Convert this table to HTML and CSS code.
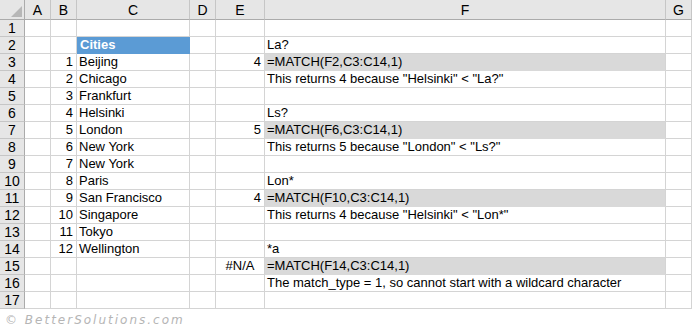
FILE: index.html
```html
<!DOCTYPE html>
<html>
<head lang="en">
    <meta charset="UTF-8">
    <title>MATCH wildcards</title>
    <link rel="stylesheet" href="styles.css">
</head>
<body>
<div class="sheet">
    <div class="corner"><span class="tri"></span></div>
    <div class="colhead">A</div>
    <div class="colhead">B</div>
    <div class="colhead">C</div>
    <div class="colhead">D</div>
    <div class="colhead">E</div>
    <div class="colhead">F</div>
    <div class="colhead">G</div>

    <div class="rowhead">1</div>
    <div class="cell"></div><div class="cell"></div><div class="cell"></div><div class="cell"></div><div class="cell"></div><div class="cell"></div><div class="cell"></div>

    <div class="rowhead">2</div>
    <div class="cell"></div><div class="cell"></div><div class="cell title">Cities</div><div class="cell"></div><div class="cell"></div><div class="cell">La?</div><div class="cell"></div>

    <div class="rowhead">3</div>
    <div class="cell"></div><div class="cell num">1</div><div class="cell">Beijing</div><div class="cell"></div><div class="cell num">4</div><div class="cell shade">=MATCH(F2,C3:C14,1)</div><div class="cell"></div>

    <div class="rowhead">4</div>
    <div class="cell"></div><div class="cell num">2</div><div class="cell">Chicago</div><div class="cell"></div><div class="cell"></div><div class="cell">This returns 4 because "Helsinki" &lt; "La?"</div><div class="cell"></div>

    <div class="rowhead">5</div>
    <div class="cell"></div><div class="cell num">3</div><div class="cell">Frankfurt</div><div class="cell"></div><div class="cell"></div><div class="cell"></div><div class="cell"></div>

    <div class="rowhead">6</div>
    <div class="cell"></div><div class="cell num">4</div><div class="cell">Helsinki</div><div class="cell"></div><div class="cell"></div><div class="cell">Ls?</div><div class="cell"></div>

    <div class="rowhead">7</div>
    <div class="cell"></div><div class="cell num">5</div><div class="cell">London</div><div class="cell"></div><div class="cell num">5</div><div class="cell shade">=MATCH(F6,C3:C14,1)</div><div class="cell"></div>

    <div class="rowhead">8</div>
    <div class="cell"></div><div class="cell num">6</div><div class="cell">New York</div><div class="cell"></div><div class="cell"></div><div class="cell">This returns 5 because "London" &lt; "Ls?"</div><div class="cell"></div>

    <div class="rowhead">9</div>
    <div class="cell"></div><div class="cell num">7</div><div class="cell">New York</div><div class="cell"></div><div class="cell"></div><div class="cell"></div><div class="cell"></div>

    <div class="rowhead">10</div>
    <div class="cell"></div><div class="cell num">8</div><div class="cell">Paris</div><div class="cell"></div><div class="cell"></div><div class="cell">Lon*</div><div class="cell"></div>

    <div class="rowhead">11</div>
    <div class="cell"></div><div class="cell num">9</div><div class="cell">San Francisco</div><div class="cell"></div><div class="cell num">4</div><div class="cell shade">=MATCH(F10,C3:C14,1)</div><div class="cell"></div>

    <div class="rowhead">12</div>
    <div class="cell"></div><div class="cell num">10</div><div class="cell">Singapore</div><div class="cell"></div><div class="cell"></div><div class="cell">This returns 4 because "Helsinki" &lt; "Lon*"</div><div class="cell"></div>

    <div class="rowhead">13</div>
    <div class="cell"></div><div class="cell num">11</div><div class="cell">Tokyo</div><div class="cell"></div><div class="cell"></div><div class="cell"></div><div class="cell"></div>

    <div class="rowhead">14</div>
    <div class="cell"></div><div class="cell num">12</div><div class="cell">Wellington</div><div class="cell"></div><div class="cell"></div><div class="cell">*a</div><div class="cell"></div>

    <div class="rowhead">15</div>
    <div class="cell"></div><div class="cell"></div><div class="cell"></div><div class="cell"></div><div class="cell err">#N/A</div><div class="cell shade">=MATCH(F14,C3:C14,1)</div><div class="cell"></div>

    <div class="rowhead">16</div>
    <div class="cell"></div><div class="cell"></div><div class="cell"></div><div class="cell"></div><div class="cell"></div><div class="cell">The match_type = 1, so cannot start with a wildcard character</div><div class="cell"></div>

    <div class="rowhead">17</div>
    <div class="cell"></div><div class="cell"></div><div class="cell"></div><div class="cell"></div><div class="cell"></div><div class="cell"></div><div class="cell"></div>
</div>
<div class="credit">&copy; BetterSolutions.com</div>
</body>
</html>
```

FILE: styles.css
```css
*{
    margin: 0;
    padding: 0;
    box-sizing: border-box;
}
body{
    background: #ffffff;
    font-family: "Liberation Sans", Arial, sans-serif;
    font-size: 13px;
    color: #000000;
}
.sheet{
    display: grid;
    grid-template-columns: 25px 26px 26px 113px 26px 49px 401px 26px;
    grid-template-rows: 20px repeat(17, 17px);
    width: 692px;
}
.corner,.colhead,.rowhead{
    background: #e6e6e6;
}
.corner{
    position: relative;
    border-right: 1px solid #ababab;
    border-bottom: 1px solid #ababab;
}
.corner .tri{
    position: absolute;
    right: 2px;
    bottom: 2px;
    width: 0;
    height: 0;
    border-left: 11px solid transparent;
    border-bottom: 11px solid #b7b7b7;
}
.colhead{
    border-right: 1px solid #c6c6c6;
    border-bottom: 1px solid #ababab;
    text-align: center;
    line-height: 19px;
    padding-top: 1px;
    font-size: 14px;
}
.rowhead{
    border-right: 1px solid #ababab;
    border-bottom: 1px solid #c6c6c6;
    text-align: center;
    line-height: 16px;
    font-size: 14px;
}
.cell{
    border-right: 1px solid #d4d4d4;
    border-bottom: 1px solid #d4d4d4;
    line-height: 16px;
    padding: 0 2px 0 2px;
    white-space: nowrap;
}
.num{
    text-align: right;
    padding-right: 3px;
}
.err{
    text-align: center;
}
.title{
    background: #5b9bd5;
    border-color: #5b9bd5;
    color: #ffffff;
    font-weight: bold;
    padding-left: 3px;
}
.shade{
    background: #d9d9d9;
    border-bottom-color: #d9d9d9;
}
/* watermark line under the grid */
.credit{
    padding: 4px 0 0 5px;
    font-family: "DejaVu Sans", sans-serif;
    font-style: italic;
    font-size: 12px;
    letter-spacing: 2px;
    color: #b5b5b5;
}
```
